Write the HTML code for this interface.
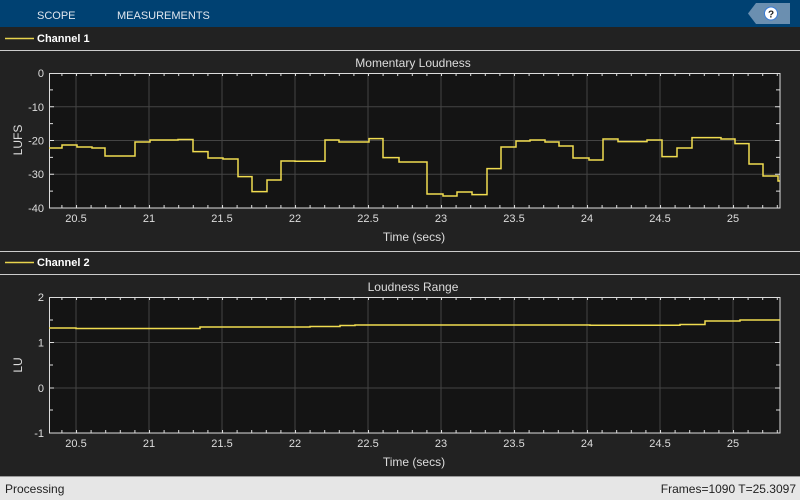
<!DOCTYPE html>
<html><head><meta charset="utf-8"><style>
body{margin:0;width:800px;height:500px;overflow:hidden;background:#222;font-family:"Liberation Sans",sans-serif}
svg{display:block}
</style></head><body>
<svg width="800" height="500" xmlns="http://www.w3.org/2000/svg" font-family="Liberation Sans, sans-serif">
<defs>
<pattern id="tb" x="61.4" y="0" width="14.6" height="500" patternUnits="userSpaceOnUse"><rect x="0" y="0" width="1" height="500" fill="#ddd"/></pattern>
</defs>
<rect width="800" height="500" fill="#222"/>
<rect width="800" height="27" fill="#004172"/>
<text x="37" y="19" fill="#dfe6ee" font-size="11">SCOPE</text>
<text x="117" y="19" fill="#dfe6ee" font-size="11">MEASUREMENTS</text>
<polygon points="756,3 790,3 790,24 756,24 748,13.5" fill="#6b8fb0"/>
<circle cx="771" cy="13.5" r="6.5" fill="#fff" stroke="#3a7bd5" stroke-width="1"/>
<text x="771" y="17.5" fill="#222" font-size="10" font-weight="bold" text-anchor="middle">?</text>
<!-- Channel 1 header -->
<line x1="5" y1="38.5" x2="34" y2="38.5" stroke="#e8d44d" stroke-width="1.5"/>
<text x="37" y="42" fill="#fff" font-size="11" font-weight="bold">Channel 1</text>
<line x1="0" y1="50.5" x2="800" y2="50.5" stroke="#ccc"/>
<!-- Plot 1 -->
<text x="413" y="67" fill="#ddd" font-size="12" text-anchor="middle">Momentary Loudness</text>
<rect x="49" y="73" width="731" height="135" fill="#141414"/>
<g stroke="#444" stroke-width="1">
<path d="M76 73V208M149 73V208M222 73V208M295 73V208M368 73V208M441 73V208M514 73V208M587 73V208M660 73V208M733 73V208"/>
<path d="M49 106.75H780M49 140.5H780M49 174.25H780"/>
</g>
<rect x="49" y="73" width="731" height="3" fill="url(#tb)"/>
<rect x="49" y="205" width="731" height="3" fill="url(#tb)"/>
<path d="M49 89.9h4M49 123.6h4M49 157.4h4M49 191.1h4M49 106.75h5M49 140.5h5M49 174.25h5M780 89.9h-4M780 123.6h-4M780 157.4h-4M780 191.1h-4M780 106.75h-5M780 140.5h-5M780 174.25h-5" stroke="#ddd"/>
<rect x="49.5" y="73.5" width="730.5" height="134.5" fill="none" stroke="#ddd"/>
<polyline fill="none" stroke="#f0dc50" stroke-width="1.5" points="49,148 62,148 62,145 77,145 77,147 92,147 92,148 105,148 105,156 135,156 135,142 150,142 150,140 178,140 178,139.5 193,139.5 193,151.6 208,151.6 208,158 223,158 223,159 238,159 238,176.6 252,176.6 252,191.6 267,191.6 267,180 281,180 281,161 295,161 295,161.3 325,161.3 325,140 339,140 339,142 369,142 369,138.6 383,138.6 383,157.6 399,157.6 399,162 427,162 427,194 443,194 443,196 457,196 457,192 472,192 472,194.6 487,194.6 487,168.6 501,168.6 501,147 516,147 516,141 530,141 530,140 545,140 545,142 559,142 559,146 573,146 573,158 589,158 589,160 603,160 603,139 618,139 618,141.6 647,141.6 647,140 662,140 662,156.6 677,156.6 677,148 692,148 692,137.6 721,137.6 721,139 735,139 735,143.6 749,143.6 749,164 763,164 763,176 778,176 778,181 780,181"/>
<g fill="#ddd" font-size="11" text-anchor="end">
<text x="44" y="77">0</text><text x="44" y="111">-10</text><text x="44" y="144.5">-20</text><text x="44" y="178">-30</text><text x="44" y="212">-40</text>
</g>
<g fill="#ddd" font-size="11" text-anchor="middle">
<text x="76" y="222">20.5</text><text x="149" y="222">21</text><text x="222" y="222">21.5</text><text x="295" y="222">22</text><text x="368" y="222">22.5</text><text x="441" y="222">23</text><text x="514" y="222">23.5</text><text x="587" y="222">24</text><text x="660" y="222">24.5</text><text x="733" y="222">25</text>
<text x="414" y="241" font-size="12">Time (secs)</text>
<text transform="translate(22,140) rotate(-90)" font-size="12">LUFS</text>
</g>
<!-- Channel 2 header -->
<line x1="0" y1="251.5" x2="800" y2="251.5" stroke="#ccc"/>
<line x1="5" y1="262.5" x2="34" y2="262.5" stroke="#e8d44d" stroke-width="1.5"/>
<text x="37" y="266" fill="#fff" font-size="11" font-weight="bold">Channel 2</text>
<line x1="0" y1="274.5" x2="800" y2="274.5" stroke="#ccc"/>
<!-- Plot 2 -->
<text x="413" y="291" fill="#ddd" font-size="12" text-anchor="middle">Loudness Range</text>
<rect x="49" y="297" width="731" height="136" fill="#141414"/>
<g stroke="#444" stroke-width="1">
<path d="M76 297V433M149 297V433M222 297V433M295 297V433M368 297V433M441 297V433M514 297V433M587 297V433M660 297V433M733 297V433"/>
<path d="M49 342.5H780M49 388H780"/>
</g>
<rect x="49" y="297" width="731" height="3" fill="url(#tb)"/>
<rect x="49" y="430" width="731" height="3" fill="url(#tb)"/>
<path d="M49 320h4M49 365h4M49 410h4M49 342.5h5M49 388h5M780 320h-4M780 365h-4M780 410h-4M780 342.5h-5M780 388h-5" stroke="#ddd"/>
<rect x="49.5" y="297.5" width="730.5" height="135.5" fill="none" stroke="#ddd"/>
<polyline fill="none" stroke="#f0dc50" stroke-width="1.5" points="49,328 76,328 76,328.5 200,328.5 200,327 310,327 310,326.5 340,326.5 340,325.5 355,325.5 355,325 590,325 590,325.3 680,325.3 680,324.5 705,324.5 705,321 740,321 740,320 780,320"/>
<g fill="#ddd" font-size="11" text-anchor="end">
<text x="44" y="301">2</text><text x="44" y="346.5">1</text><text x="44" y="392">0</text><text x="44" y="437">-1</text>
</g>
<g fill="#ddd" font-size="11" text-anchor="middle">
<text x="76" y="447">20.5</text><text x="149" y="447">21</text><text x="222" y="447">21.5</text><text x="295" y="447">22</text><text x="368" y="447">22.5</text><text x="441" y="447">23</text><text x="514" y="447">23.5</text><text x="587" y="447">24</text><text x="660" y="447">24.5</text><text x="733" y="447">25</text>
<text x="414" y="466" font-size="12">Time (secs)</text>
<text transform="translate(22,365) rotate(-90)" font-size="12">LU</text>
</g>
<!-- status bar -->
<rect x="0" y="476" width="800" height="24" fill="#e6e6e6"/>
<line x1="0" y1="476.5" x2="800" y2="476.5" stroke="#999"/>
<text x="5" y="493" fill="#222" font-size="12">Processing</text>
<text x="796" y="493" fill="#222" font-size="12" text-anchor="end">Frames=1090  T=25.3097</text>
</svg>
</body></html>
